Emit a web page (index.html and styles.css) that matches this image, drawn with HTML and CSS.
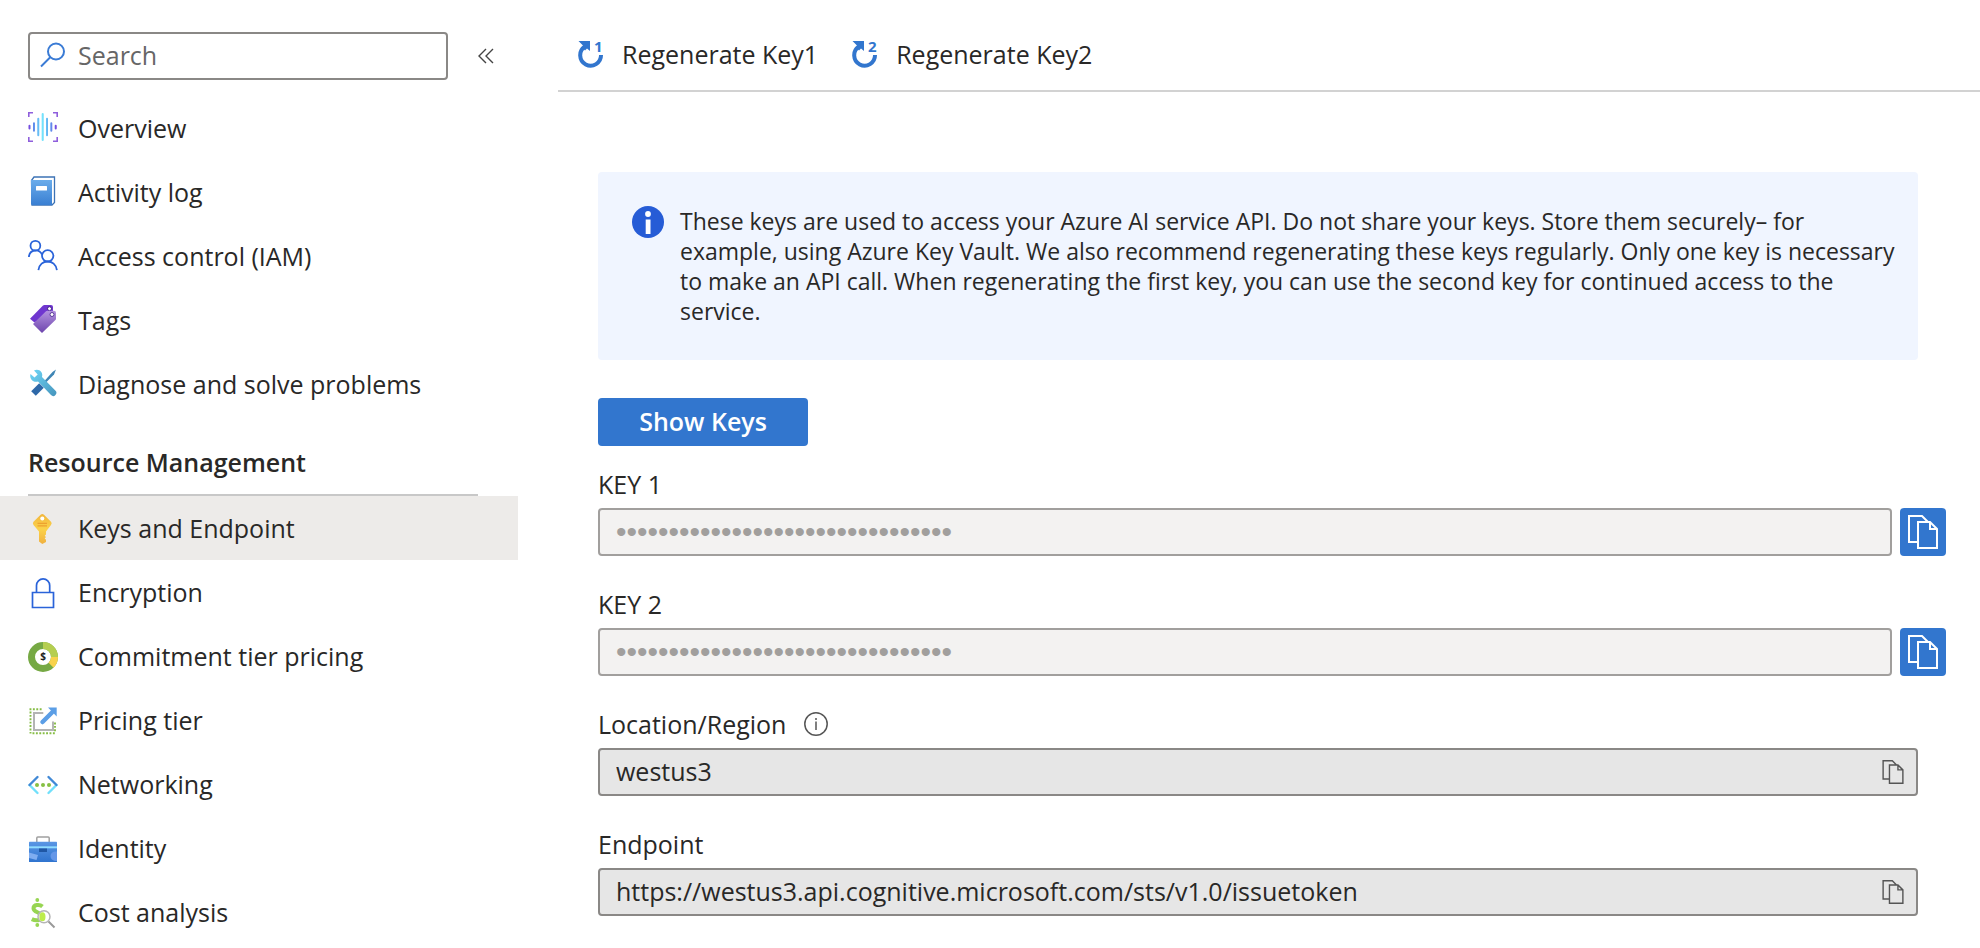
FILE: index.html
```html
<!DOCTYPE html>
<html lang="en">
<head>
<meta charset="utf-8">
<title>Keys and Endpoint</title>
<link rel="stylesheet" href="styles.css">
</head>
<body>
<svg class="defs" width="0" height="0" aria-hidden="true">
  <defs>
    <linearGradient id="g-wave" gradientUnits="userSpaceOnUse" x1="0" y1="0" x2="29" y2="0">
      <stop offset="0" stop-color="#773adc"/><stop offset=".25" stop-color="#5ea0ef"/><stop offset=".5" stop-color="#71e4fc"/><stop offset=".75" stop-color="#5ea0ef"/><stop offset="1" stop-color="#773adc"/>
    </linearGradient>
    <linearGradient id="g-blue" x1="0" y1="0" x2="0" y2="1"><stop offset="0" stop-color="#6aaceb"/><stop offset="1" stop-color="#3a7fd2"/></linearGradient>
    <linearGradient id="g-case" x1="0" y1="0" x2="0" y2="1"><stop offset="0" stop-color="#5a96e4"/><stop offset="1" stop-color="#2f74cf"/></linearGradient>
    <linearGradient id="g-tag" x1="0" y1="0" x2="0" y2="1"><stop offset="0" stop-color="#b493e0"/><stop offset="1" stop-color="#6d45ad"/></linearGradient>
    <linearGradient id="g-tool" x1="0" y1="0" x2="1" y2="1"><stop offset="0" stop-color="#6ed6f7"/><stop offset="1" stop-color="#4695bd"/></linearGradient>
    <linearGradient id="g-key" x1="0" y1="0" x2="0" y2="1"><stop offset="0" stop-color="#f2b63c"/><stop offset=".5" stop-color="#fbd24a"/><stop offset="1" stop-color="#f0b040"/></linearGradient>
    <symbol id="copy" viewBox="0 0 30 34">
      <path d="M9 27H1V1h13l6 6M10 7h12l7 7v19H10zM22 7v7h7" fill="none" stroke="currentColor" stroke-width="2"/>
    </symbol>
    <symbol id="regen" viewBox="0 0 26 28">
      <path d="M7 6.5A10.400 10.400 0 1 0 23 15" fill="none" stroke="currentColor" stroke-width="4"/>
      <path d="M.5 1h11.500v10l-3-2.500-2 2-3-3 1-2z" fill="currentColor"/>
    </symbol>
  </defs>
</svg>
<div class="page">
  <aside class="sidebar">
    <div class="search-row">
      <label class="search">
        <svg class="search-icon" viewBox="0 0 26 26" aria-hidden="true"><g fill="none" stroke="#3a7bd5" stroke-width="2"><circle cx="16" cy="9.500" r="8"/><path d="M10.500 15L1 24.500"/></g></svg>
        <input class="search-input" type="text" placeholder="Search" aria-label="Search">
      </label>
      <button class="collapse" type="button" aria-label="Collapse menu">
        <svg viewBox="0 0 16 16" width="16" height="16"><path d="M8 1L1 8l7 7M15 1L8 8l7 7" fill="none" stroke="#444" stroke-width="1.400"/></svg>
      </button>
    </div>
    <nav class="nav">
      <a class="item" href="#"><svg class="icon" viewBox="0 0 30 32"><path d="M.8 5V.8H5M25 .8h4.200V5M29.200 25v4.200H25M5 29.200H.8V25" fill="none" stroke="#8f5fdc" stroke-width="1.600"/><path d="M1.500 13.800v2.600M6 11.300v7.400M10.300 6.800v16.400M14.700 2v26M19 6.800v16.400M23.300 11.300v7.400M27.700 13.800v2.600" fill="none" stroke="url(#g-wave)" stroke-width="2" stroke-linecap="round"/></svg>Overview</a>
      <a class="item" href="#"><svg class="icon" viewBox="0 0 30 32"><path d="M3.500 4.500L6 1h20.500v25.500L24 29H4z" fill="#fff" stroke="#3d73b5" stroke-width="1.300"/><path d="M3 4h21v25H4.500A1.500 1.500 0 0 1 3 27.500z" fill="url(#g-blue)"/><rect x="8" y="10" width="11" height="4.500" rx=".5" fill="#fff"/></svg>Activity log</a>
      <a class="item" href="#"><svg class="icon" viewBox="0 0 30 32"><g fill="none" stroke="#2a63d9" stroke-width="1.800"><circle cx="7.400" cy="5.700" r="4.900"/><circle cx="19.700" cy="15.800" r="5.700"/><path d="M.9 17C1.500 9.500 11 8 14 14.500M10.400 30.200c1.200-11.600 17.200-11.600 18.500 0"/></g></svg>Access control (IAM)</a>
      <a class="item" href="#"><svg class="icon" viewBox="0 0 30 32"><path d="M2 14.700L15 1.500q.6-.6 1.400-.6H23q2 0 2 2v4L6.500 18.500z" fill="#6f36cf"/><circle cx="21.500" cy="4.700" r="2" fill="#fff" stroke="#3f1d87"/><path d="M5 20L18 7.300q.6-.6 1.400-.6H26q2 0 2 2v6q0 .8-.6 1.400L14 29z" fill="url(#g-tag)"/><circle cx="24" cy="10.500" r="2" fill="#fff" stroke="#5b3a9a"/></svg>Tags</a>
      <a class="item" href="#"><svg class="icon" viewBox="0 0 30 32"><path d="M28 1.500l-2 5-8.500 8.500-1.500-1.500L24.500 4z" fill="#3f86b5"/><path d="M13.500 17.500L5.500 25.500" stroke="#2e68a8" stroke-width="6.500"/><path d="M6 2.500c5-2.500 9.500 2 8 6.500L27.300 22.500a2.800 2.800 0 0 1-4.300 4.600L10 13.500C5.500 15 1 11 2.500 6l4 3.500 3.200-3z" fill="url(#g-tool)"/></svg>Diagnose and solve problems</a>
      <h2 class="group">Resource Management</h2>
      <a class="item current" href="#" aria-current="page"><svg class="icon" viewBox="0 0 30 32"><path d="M12.600 2.700q1.700-1.400 3.400 0l7 7q1.400 1.500 0 3.200l-5 6.600v3l-1.300 1.200 1.300 1.300-1.300 1.400 1.300 1.400v2.200L14.300 32 11 29.500v-10L5.500 13q-1.200-1.700 0-3.300z" fill="url(#g-key)"/><circle cx="14.300" cy="6.600" r="2" fill="#fff"/><path d="M9.500 11.400h9.500M9.500 13.800h9.500" stroke="#eda12f" stroke-width="1.200"/></svg>Keys and Endpoint</a>
      <a class="item" href="#"><svg class="icon" viewBox="0 0 30 32"><path d="M4.500 16.500h21v15h-21zM8.500 16.500V9.500a6.600 6.600 0 0 1 13.200 0v7" fill="none" stroke="#2a63d9" stroke-width="1.700"/></svg>Encryption</a>
      <a class="item" href="#"><svg class="icon" viewBox="0 0 30 32"><g fill="none" stroke-width="7"><circle cx="15" cy="17" r="11.500" stroke="#76a944"/><path d="M15 5.500A11.500 11.500 0 0 1 26.500 17" stroke="#b5ce50"/><path d="M26.500 17a11.500 11.500 0 0 1-3.400 8.200" stroke="#f8d24b"/></g><text class="coin" x="15" y="20" text-anchor="middle">$</text></svg>Commitment tier pricing</a>
      <a class="item" href="#"><svg class="icon" viewBox="0 0 30 32"><path d="M1.500 5.200h12.700M2.500 7.500v22M4.500 29.200h23.500M27 18.500v10" fill="none" stroke="#86bd45" stroke-width="1.900" stroke-dasharray="1.900 1.500"/><path d="M15.300 9H6v17h19v-8.500" fill="none" stroke="#b4b4b4" stroke-width="2"/><path d="M14.500 18L24 8.500" stroke="#5b9ee6" stroke-width="4.500" stroke-linecap="round"/><path d="M20 3.500h8.700v9z" fill="#5b9ee6"/></svg>Pricing tier</a>
      <a class="item" href="#"><svg class="icon" viewBox="0 0 30 32"><g fill="none" stroke-width="2.400" stroke-linecap="round"><path d="M1.500 17l8 8M28.500 17l-8 8" stroke="#71e0fb"/><path d="M1.500 17l8-8M28.500 17l-8-8" stroke="#4189d6"/></g><g fill="#86c043"><circle cx="9" cy="17" r="2"/><circle cx="15" cy="17" r="2"/><circle cx="21" cy="17" r="2"/></g></svg>Networking</a>
      <a class="item" href="#"><svg class="icon" viewBox="0 0 30 32"><path d="M8.800 10V6q0-1 1-1h10.400q1 0 1 1v4" fill="none" stroke="#a0a0a0" stroke-width="1.500"/><rect x="1" y="9.700" width="28" height="20.300" rx=".6" fill="url(#g-case)"/><path d="M1 15.300h28" stroke="#8fdcff" stroke-width="2"/><rect x="11" y="16.500" width="8" height="3.500" fill="#1f57a4"/><path d="M1 20.500l9 2.500-1.500 5L1 26z" fill="#7fadf0"/><path d="M29 19.500c-4-.5-6.500 1.500-6.500 4.500s2.500 5 6.500 5z" fill="#6597e8"/></svg>Identity</a>
      <a class="item" href="#"><svg class="icon" viewBox="0 0 30 32"><path d="M14.500 10.500c-3-2.500-9-2-9 1.800 0 4.700 8 3.200 8 8.200 0 4.500-6 4.500-9.700 2.600" fill="none" stroke="#97d552" stroke-width="4"/><circle cx="9.300" cy="4" r="1.900" fill="#97d552"/><circle cx="9.300" cy="29" r="1.900" fill="#97d552"/><circle cx="16" cy="20.700" r="6" fill="#fff" fill-opacity=".7" stroke="#b5b5b5" stroke-width="1.500"/><ellipse cx="14.500" cy="20.700" rx="3" ry="4.500" fill="#bdec4b"/><path d="M20.500 25.500l6 6" stroke="#999" stroke-width="2"/></svg>Cost analysis</a>
    </nav>
  </aside>
  <main class="main">
    <div class="toolbar">
      <button class="command" type="button"><svg class="regen" viewBox="0 0 26 28" aria-hidden="true"><use href="#regen"/><text class="digit" x="16" y="12">1</text></svg>Regenerate Key1</button>
      <button class="command" type="button"><svg class="regen" viewBox="0 0 26 28" aria-hidden="true"><use href="#regen"/><text class="digit" x="16" y="12">2</text></svg>Regenerate Key2</button>
    </div>
    <div class="content">
      <div class="notice">
        <svg class="notice-icon" viewBox="0 0 32 32" aria-hidden="true"><circle cx="16" cy="16" r="16" fill="#265cd6"/><circle cx="16" cy="8" r="2.900" fill="#fff"/><rect x="13.700" y="13.500" width="4.800" height="14.500" fill="#fff"/></svg>
        <p class="notice-text">These keys are used to access your Azure AI service API. Do not share your keys. Store them securely– for example, using Azure Key Vault. We also recommend regenerating these keys regularly. Only one key is necessary to make an API call. When regenerating the first key, you can use the second key for continued access to the service.</p>
      </div>
      <button class="primary" type="button">Show Keys</button>
      <div class="field secret">
        <label class="label" for="key1">KEY 1</label>
        <div class="control">
          <input class="box masked" id="key1" type="password" value="00000000000000000000000000000000" disabled>
          <button class="copy-button" type="button" aria-label="Copy key 1"><svg width="30" height="34"><use href="#copy"/></svg></button>
        </div>
      </div>
      <div class="field secret">
        <label class="label" for="key2">KEY 2</label>
        <div class="control">
          <input class="box masked" id="key2" type="password" value="00000000000000000000000000000000" disabled>
          <button class="copy-button" type="button" aria-label="Copy key 2"><svg width="30" height="34"><use href="#copy"/></svg></button>
        </div>
      </div>
      <div class="field">
        <label class="label" for="region">Location/Region
          <svg class="hint" viewBox="0 0 24 24" aria-hidden="true"><circle cx="12" cy="12" r="11.200" fill="none" stroke="#555" stroke-width="1.500"/><path d="M12 9.500v8.500M12 6v2" stroke="#555" stroke-width="1.500"/></svg>
        </label>
        <div class="box readonly">
          <input class="value" id="region" type="text" value="westus3" readonly>
          <button class="copy-inline" type="button" aria-label="Copy location"><svg width="22" height="24"><use href="#copy"/></svg></button>
        </div>
      </div>
      <div class="field">
        <label class="label" for="endpoint">Endpoint</label>
        <div class="box readonly">
          <input class="value" id="endpoint" type="text" value="https://westus3.api.cognitive.microsoft.com/sts/v1.0/issuetoken" readonly>
          <button class="copy-inline" type="button" aria-label="Copy endpoint"><svg width="22" height="24"><use href="#copy"/></svg></button>
        </div>
      </div>
    </div>
  </main>
</div>
</body>
</html>
```
FILE: styles.css
```css
* { box-sizing: border-box; }

body {
  margin: 0;
  background: #fff;
  color: #292827;
  font: 25px/32px "Open Sans", "Noto Sans", sans-serif;
}

button, input { font: inherit; color: inherit; }
button { border: 0; padding: 0; background: none; cursor: pointer; }
svg { flex: none; overflow: visible; }
.defs { position: absolute; }

.page { display: flex; gap: 40px; }

/* Sidebar */
.sidebar { flex: none; width: 518px; }
.search-row {
  display: flex;
  align-items: center;
  gap: 30px;
  padding: 32px 24px 16px 28px;
}
.search {
  display: flex;
  flex: 1;
  align-items: center;
  gap: 12px;
  height: 48px;
  padding: 0 10px 2px;
  border: 2px solid #8a8886;
  border-radius: 4px;
}
.search-icon { width: 26px; height: 26px; }
.search-input {
  flex: 1;
  min-width: 0;
  padding: 0;
  border: 0;
  outline: 0;
  background: none;
}
.search-input::placeholder { color: #666; opacity: 1; }
.collapse { display: flex; }

.item {
  display: flex;
  align-items: center;
  gap: 20px;
  height: 64px;
  padding: 0 28px;
  color: inherit;
  text-decoration: none;
}
.item.current { background: #edebe9; }
.icon { width: 30px; height: 32px; }
.coin { font-size: 10px; font-weight: 700; fill: #222; }
.group {
  margin: 0 40px 0 28px;
  padding: 30px 0 16px;
  border-bottom: 2px solid #c8c8c8;
  font-size: 25px;
  font-weight: 600;
}

/* Main pane */
.main { flex: 1; min-width: 0; }
.toolbar {
  display: flex;
  gap: 34px;
  height: 92px;
  padding: 18px 20px 0;
  border-bottom: 2px solid #d2d2d2;
}
.command { display: flex; align-items: center; gap: 18px; height: 72px; }
.regen { width: 26px; height: 28px; color: #3276ce; }
.digit { font-size: 15px; font-weight: 700; fill: #3276ce; }

.content { padding: 80px 62px 32px 40px; }
.notice {
  display: flex;
  gap: 16px;
  padding: 34px 18px 34px 34px;
  border-radius: 4px;
  background: #f0f5ff;
}
.notice-icon { width: 32px; height: 32px; }
.notice-text { margin: 0; font-size: 23px; line-height: 30px; }

.primary {
  display: block;
  width: 210px;
  height: 48px;
  margin: 38px 0 22px;
  padding-bottom: 2px;
  border-radius: 4px;
  background: #3276ce;
  color: #fff;
  font-weight: 600;
}

.field { margin-bottom: 32px; }
.secret { margin-right: -28px; }
.label {
  display: flex;
  align-items: center;
  gap: 18px;
  height: 32px;
  margin-bottom: 8px;
}
.hint { width: 24px; height: 24px; }
.control { display: flex; gap: 8px; }
.box {
  height: 48px;
  border: 2px solid #8a8886;
  border-radius: 4px;
}
.masked {
  flex: 1;
  min-width: 0;
  padding: 0 16px;
  border-color: #a19f9d;
  background: #f3f2f1;
  color: #a19f9d;
  font: 30px "Liberation Sans", sans-serif;
}
.copy-button {
  display: flex;
  align-items: center;
  justify-content: center;
  width: 46px;
  height: 48px;
  border-radius: 4px;
  background: #3276ce;
  color: #fff;
}
.readonly {
  display: flex;
  align-items: center;
  padding: 0 12px 0 16px;
  background: #e6e6e6;
}
.value {
  flex: 1;
  min-width: 0;
  padding: 0 0 2px;
  border: 0;
  outline: 0;
  background: none;
}
.copy-inline { display: flex; color: #555; }
```
